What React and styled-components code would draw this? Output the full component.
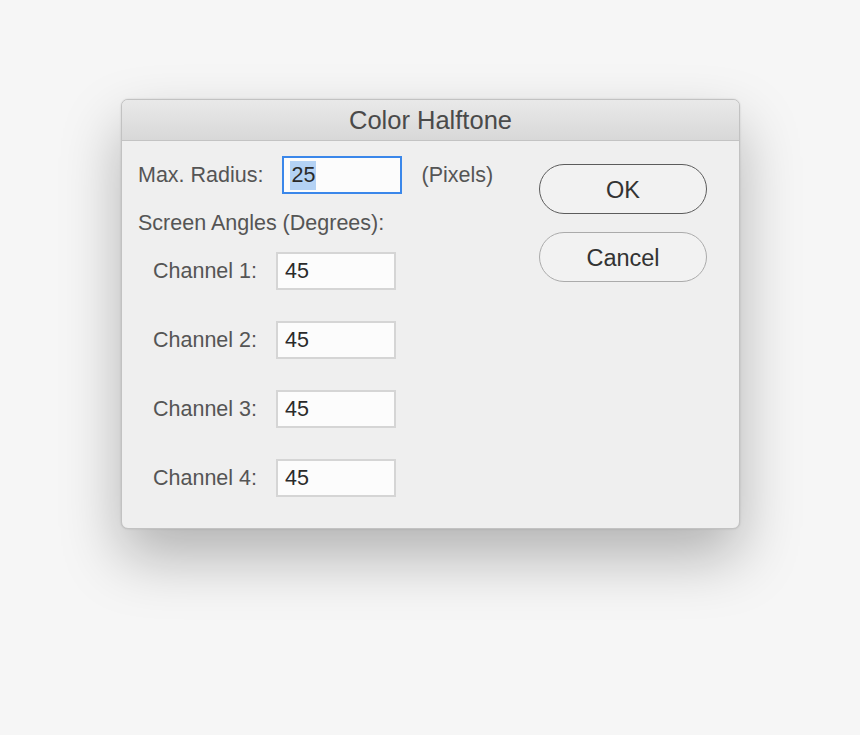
import React from 'react';
import styled, { createGlobalStyle } from 'styled-components';

const GlobalStyle = createGlobalStyle`
  body {
    margin: 0;
    background: #f6f6f6;
    font-family: "Liberation Sans", Arial, sans-serif;
  }
`;

const Page = styled.div`
  min-height: 735px;
  padding: 99px 0 0 121px;
  box-sizing: border-box;
`;

const Dialog = styled.div`
  width: 619px;
  height: 430px;
  box-sizing: border-box;
  background: #efefef;
  border: 1px solid #c2c2c2;
  border-radius: 7px;
  box-shadow: 0 28px 60px rgba(0, 0, 0, 0.28), 0 0 2px rgba(0, 0, 0, 0.15);
  overflow: hidden;
  display: flex;
  flex-direction: column;
`;

const TitleBar = styled.div`
  height: 41px;
  box-sizing: border-box;
  display: flex;
  align-items: center;
  justify-content: center;
  background: linear-gradient(#e9e9e9, #d8d8d8);
  border-bottom: 1px solid #c3c3c3;
  font-size: 25.5px;
  color: #4a4a4a;
  padding-top: 1px;
`;

const Body = styled.div`
  flex: 1;
  display: flex;
  justify-content: space-between;
  padding: 15px 32px 0 16px;
`;

const Form = styled.div`
  display: flex;
  flex-direction: column;
`;

const Row = styled.div`
  display: flex;
  align-items: center;
  gap: 19px;
  height: 38px;
  padding-left: ${(p) => p.$indent || 0}px;
  margin-top: ${(p) => p.$top || 0}px;
`;

const Label = styled.span`
  font-size: 21.5px;
  color: #555555;
  white-space: nowrap;
`;

const Heading = styled(Label)`
  display: block;
  margin-top: 17px;
  line-height: 24px;
`;

const Field = styled.div`
  width: 120px;
  height: 38px;
  box-sizing: border-box;
  display: flex;
  align-items: center;
  padding-left: ${(p) => (p.$focused ? 6 : 7)}px;
  background: #fcfcfc;
  border: ${(p) => (p.$focused ? '2px solid #3a87ea' : '2px solid #d5d5d5')};
  font-size: 21.5px;
  color: #2a2a2a;
`;

const Selected = styled.span`
  background: #b4d2f4;
  padding: 2px 1px;
`;

const Buttons = styled.div`
  display: flex;
  flex-direction: column;
  gap: 18px;
  padding-top: 8px;
`;

const Button = styled.button`
  width: 168px;
  height: 50px;
  border-radius: 25px;
  background: #f2f2f2;
  border: ${(p) => (p.$primary ? '1.5px solid #5c5c5c' : '1.5px solid #ababab')};
  font-family: "Liberation Sans", Arial, sans-serif;
  font-size: 23.5px;
  color: #333333;
  padding: 3px 0 0;
`;

const channels = [1, 2, 3, 4];

export default function App() {
  return (
    <>
      <GlobalStyle />
      <Page>
        <Dialog>
          <TitleBar>Color Halftone</TitleBar>
          <Body>
            <Form>
              <Row>
                <Label>Max. Radius:</Label>
                <Field $focused>
                  <Selected>25</Selected>
                </Field>
                <Label>(Pixels)</Label>
              </Row>
              <Heading>Screen Angles (Degrees):</Heading>
              {channels.map((n, i) => (
                <Row key={n} $indent={15} $top={i === 0 ? 17 : 31}>
                  <Label>Channel {n}:</Label>
                  <Field>45</Field>
                </Row>
              ))}
            </Form>
            <Buttons>
              <Button $primary>OK</Button>
              <Button>Cancel</Button>
            </Buttons>
          </Body>
        </Dialog>
      </Page>
    </>
  );
}
